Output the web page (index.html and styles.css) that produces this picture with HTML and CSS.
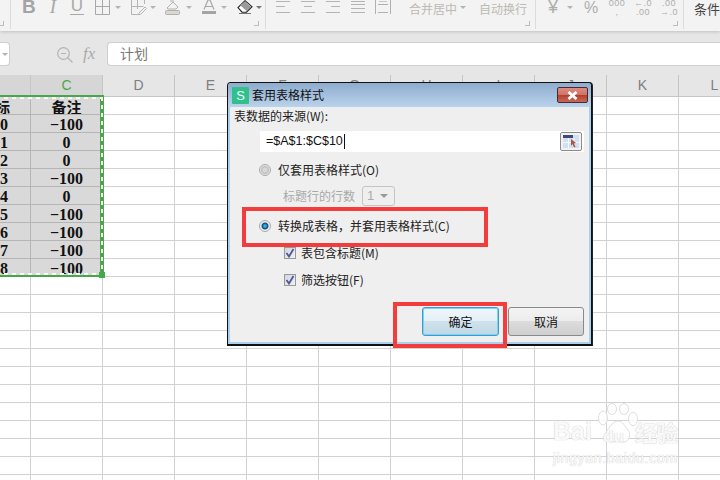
FILE: index.html
```html
<!DOCTYPE html>
<html lang="zh-CN">
<head>
<meta charset="utf-8">
<title>套用表格样式</title>
<link rel="stylesheet" href="styles.css">
</head>
<body>
<div class="page">
  <header class="ribbon">
    <div class="group g0"><i class="corner"></i></div>
    <div class="group g1">
      <span class="tool bold m11">B</span>
      <span class="tool ital m14">I</span>
      <span class="tool und m12">U</span>
      <svg class="ico m11" width="15" height="15" viewBox="0 0 15 15"><path d="M.5-1v15.5h14V-1M7.500-1v15.500M.5 6.500h14" fill="none" stroke="#a8a8a8"/></svg>
      <i class="arr m5"></i>
      <svg class="ico m10" width="16" height="15" viewBox="0 0 16 15"><path d="M.5 0v14.500h8M13.500 0v4M.5 6.500h12M6.500 0v9" fill="none" stroke="#b4b4b4"/><path d="M8 13l6-6 1.500 1.500-6 6H8z" fill="none" stroke="#b4b4b4"/></svg>
      <i class="arr m3"></i>
      <svg class="ico m9" width="16" height="15" viewBox="0 0 16 15"><path d="M2 8l6-6 5 5-2 2H3z" fill="none" stroke="#b0b0b0"/><path d="M5 1h4" stroke="#b0b0b0"/><rect x=".5" y="10.500" width="14" height="4" rx="1" fill="#dcd8d0" stroke="#b0b0b0"/></svg>
      <i class="arr m5"></i>
      <svg class="ico m10" width="14" height="15" viewBox="0 0 14 15"><path d="M2 9.500L6 0h2l4 9.500M3.500 6.500h7" fill="none" stroke="#a8a8a8" stroke-width="1.200"/><rect y="11" width="14" height="3" fill="#a4a4a4"/></svg>
      <i class="arr m5"></i>
      <svg class="ico m10" width="16" height="15" viewBox="0 0 16 15"><path d="M8 0.700l7 6-5.500 5.500H5L1 7.500z" fill="#fff" stroke="#222" stroke-width="1.100"/><path d="M8 1.500l6 5.200-4.500 4.300-6.500-6z" fill="#9a9a9a"/><path d="M2 13.500h12" stroke="#777"/></svg>
      <i class="arr dark m3"></i>
      <i class="corner"></i>
    </div>
    <div class="group g2">
      <svg class="ico m10" width="14" height="14" viewBox="0 0 14 14"><path d="M0 1.500h14M0 6.500h9M0 12.500h14" stroke="#b4b4b4"/></svg>
      <svg class="ico m11" width="14" height="14" viewBox="0 0 14 14"><path d="M0 1.500h14M3 6.500h8M0 12.500h14" stroke="#b4b4b4"/></svg>
      <svg class="ico m11" width="14" height="14" viewBox="0 0 14 14"><path d="M0 1.500h14M5 6.500h9M0 12.500h14" stroke="#b4b4b4"/></svg>
      <svg class="ico m11" width="14" height="14" viewBox="0 0 14 14"><path d="M0 1.500h14M0 4.500h14M0 8.500h14M0 12.500h14" stroke="#b4b4b4"/></svg>
      <svg class="ico m10" width="16" height="14" viewBox="0 0 16 14"><path d="M.5 0v14M15.500 0v14M3 4.500h10M3 12.500h10" stroke="#b0b0b0" fill="none"/><path d="M4 1.500h8" stroke="#c8c8c8"/></svg>
      <span class="tool word m18">合并居中</span>
      <i class="arr m3"></i>
      <span class="tool word m13">自动换行</span>
      <i class="corner"></i>
    </div>
    <div class="group g3">
      <span class="tool yen m12">¥</span>
      <i class="arr m6"></i>
      <span class="tool pct m11">%</span>
      <span class="tool num m11">000<br>,</span>
      <span class="tool num m8">←.0<br>.00</span>
      <span class="tool num m8">.00<br>→.0</span>
      <i class="corner"></i>
    </div>
    <div class="group g4"><span class="tool cond">条件格式</span></div>
  </header>

  <div class="formula">
    <div class="namebox"><i class="arr"></i></div>
    <svg class="zoomico" width="16" height="16" viewBox="0 0 16 16"><circle cx="6.500" cy="6.500" r="5.800" fill="none" stroke="#b4b4b4" stroke-width="1.200"/><path d="M4 6.500h5M10.500 10.500l5 5" stroke="#b4b4b4" stroke-width="1.200"/></svg>
    <span class="fx">fx</span>
    <div class="fbox">计划</div>
  </div>

  <div class="colhead">
    <span class="ch c-first"></span>
    <span class="ch active">C</span>
    <span class="ch">D</span>
    <span class="ch">E</span>
    <span class="ch">F</span>
    <span class="ch">G</span>
    <span class="ch">H</span>
    <span class="ch">I</span>
    <span class="ch">J</span>
    <span class="ch">K</span>
    <span class="ch">L</span>
  </div>

  <main class="sheet">
    <div class="data">
      <div class="cell left head"><span class="cut">标</span></div><div class="cell head">备注</div>
      <div class="cell left">0</div><div class="cell">−100</div>
      <div class="cell left">1</div><div class="cell">0</div>
      <div class="cell left">2</div><div class="cell">0</div>
      <div class="cell left">3</div><div class="cell">−100</div>
      <div class="cell left">4</div><div class="cell">0</div>
      <div class="cell left">5</div><div class="cell">−100</div>
      <div class="cell left">6</div><div class="cell">−100</div>
      <div class="cell left">7</div><div class="cell">−100</div>
      <div class="cell left">8</div><div class="cell">−100</div>
    </div>
    <div class="selection"><i class="handle"></i></div>
  </main>

  <section class="dialog">
    <div class="titlebar">
      <span class="appicon">S</span>
      <span class="title">套用表格样式</span>
      <span class="close"><svg width="13" height="9" viewBox="0 0 13 9"><path d="M2.500 1l8 7M10.500 1l-8 7" stroke="#fff" stroke-width="2.800"/></svg></span>
    </div>
    <div class="body">
      <div class="row lbl">表数据的来源(W):</div>
      <div class="source">
        <span class="srcval">=$A$1:$C$10</span><i class="caret"></i>
        <span class="picker"><svg width="18" height="15" viewBox="0 0 18 15"><rect x="1" y="1" width="16" height="13" fill="#cfe0f5"/><rect x="1" y="1" width="10" height="3" fill="#46467e"/><path d="M1 8.500h16M6.500 4v10M12 4v10" stroke="#f4f8fc"/><path d="M9 5l5 4-2 .5 1.500 3.500-1.500.5-1.500-3.500L9 12z" fill="#b0553e"/></svg></span>
      </div>
      <label class="row opt opt-o"><i class="radio"></i>仅套用表格样式(O)</label>
      <div class="row sub"><span class="muted">标题行的行数</span><span class="select">1<i class="arr"></i></span></div>
      <label class="row opt opt-c"><i class="radio on"></i>转换成表格，并套用表格样式(C)</label>
      <label class="row chk chk-m"><i class="check"><svg width="10" height="10" viewBox="0 0 10 10"><path d="M1.500 5l2.500 3.500L8.500 1" fill="none" stroke="#4a5a9a" stroke-width="1.800"/></svg></i>表包含标题(M)</label>
      <label class="row chk chk-f"><i class="check"><svg width="10" height="10" viewBox="0 0 10 10"><path d="M1.500 5l2.500 3.500L8.500 1" fill="none" stroke="#4a5a9a" stroke-width="1.800"/></svg></i>筛选按钮(F)</label>
      <div class="actions">
        <button class="btn primary">确定</button>
        <button class="btn">取消</button>
      </div>
    </div>
  </section>

  <div class="mark box-a"></div>
  <div class="mark box-b"></div>

  <div class="watermark">
    <svg class="paw" width="42" height="42" viewBox="0 0 42 42"><g fill="#fff" fill-opacity=".8" stroke="#dedede"><ellipse cx="6" cy="15" rx="4.500" ry="7"/><ellipse cx="15" cy="6" rx="4.500" ry="5.500"/><ellipse cx="27" cy="6" rx="4.500" ry="5.500"/><ellipse cx="36" cy="16" rx="4.500" ry="6.500"/><path d="M21 18c5 0 7 6 10 9s2 13-6 12c-3-.5-6-.5-9 0-8 1-9-8-5.500-12S16 18 21 18z"/></g></svg>
    <span class="wm-a">Bai</span><span class="wm-du">du</span><span class="wm-b">经验</span>
    <span class="wm-url">jingyan.baidu.com</span>
  </div>
</div>
</body>
</html>
```
FILE: styles.css
```css
* { box-sizing: border-box; }
html, body { margin: 0; padding: 0; }
body { width: 720px; height: 480px; overflow: hidden; background: #fff; font-family: "Noto Sans CJK SC", "Liberation Sans", sans-serif; }
i { font-style: normal; display: block; }
.page { position: relative; width: 720px; height: 480px; overflow: hidden; display: flex; flex-direction: column; }

/* ribbon */
.ribbon { height: 31px; flex: none; display: flex; background: #f3f3f3; position: relative; z-index: 2; box-shadow: 0 1px 3px rgba(0,0,0,.16); }
.group { position: relative; height: 29px; display: flex; align-items: flex-start; border-right: 1px solid #dcdcdc; flex: none; }
.g0 { width: 11px; }
.g1 { width: 255px; }
.g2 { width: 270px; }
.g3 { width: 148px; }
.g4 { border-right: 0; flex: 1; overflow: hidden; }
.corner { position: absolute; right: 2px; bottom: 2px; width: 5px; height: 5px; border-right: 1px solid #bdbdbd; border-bottom: 1px solid #bdbdbd; }
.g1 > .corner { right: 6px; bottom: 3px; }
.g2 > .corner { right: 5px; bottom: 3px; }
.g3 > .corner { right: 5px; bottom: 3px; }
.g0 > .corner { right: 6px; bottom: 3px; }
.m3 { margin-left: 3px; } .m5 { margin-left: 5px; } .m6 { margin-left: 6px; } .m8 { margin-left: 8px; }
.m9 { margin-left: 9px; } .m10 { margin-left: 10px; } .m11 { margin-left: 11px; } .m12 { margin-left: 12px; }
.m13 { margin-left: 13px; } .m14 { margin-left: 14px; } .m18 { margin-left: 18px; }
.ico { flex: none; display: block; }
.arr { width: 0; height: 0; flex: none; border-left: 3px solid transparent; border-right: 3px solid transparent; border-top: 3px solid #b4b4b4; margin-top: 6px; }
.arr.dark { border-top-color: #777; }
.tool { flex: none; color: #b0b0b0; display: block; white-space: nowrap; }
.bold { width: 12px; font: bold 19px/14px "Liberation Sans", sans-serif; color: #a4a4a4; }
.ital { width: 10px; font: italic 19px/14px "Liberation Serif", serif; color: #a8a8a8; text-align: center; }
.und { width: 14px; height: 15px; font: 17px/12px "Liberation Sans", sans-serif; color: #a8a8a8; text-align: center; border-bottom: 1px solid #a8a8a8; }
.word { width: 48px; font-size: 12px; line-height: 18px; color: #bdb9b4; }
.yen { width: 13px; font: 18px/15px "Liberation Sans", sans-serif; color: #adadad; }
.pct { width: 13px; font: 16px/16px "Liberation Sans", sans-serif; color: #adadad; }
.num { font: 9px/9px "Liberation Sans", sans-serif; letter-spacing: .5px; color: #adadad; width: 18px; text-align: center; margin-top: -1px; }
.cond { margin-left: 10px; font-size: 13px; line-height: 18px; color: #444; }

/* formula */
.formula { height: 35px; flex: none; background: #e6e6e6; display: flex; align-items: flex-end; }
.namebox { width: 10px; height: 24px; background: #fff; border: 1px solid #cfcfcf; border-left: 0; border-radius: 0 4px 4px 0; display: flex; justify-content: center; align-items: center; }
.namebox .arr { margin: 0; }
.zoomico { margin: 0 0 3px 47px; flex: none; }
.fx { width: 17px; margin: 0 0 1px 10px; font: italic 17px/22px "Liberation Serif", serif; color: #aaa; flex: none; }
.fbox { flex: 1; margin-left: 7px; height: 24px; background: #fff; border: 1px solid #cfcfcf; border-right: 0; border-radius: 4px 0 0 4px; padding-left: 12px; font-size: 14px; line-height: 21px; color: #777; }

/* column heads */
.colhead { height: 31px; flex: none; background: #e6e6e6; padding-top: 9px; display: grid; grid-template-columns: 31px repeat(10, 72px); }
.ch { height: 22px; background: #e6e6e6; border-right: 1px solid #c6c6c6; border-bottom: 1px solid #c6c6c6; text-align: center; font: 14px/21px "Liberation Sans", sans-serif; color: #7f7f7f; }
.c-first { background: #d6d6d6; }
.ch.active { background: #d6d6d6; color: #4aa84a; }

/* sheet */
.sheet { flex: 1; position: relative; background-color: #fff;
  background-image: linear-gradient(to right, transparent 71px, #d2d2d2 71px), linear-gradient(to bottom, transparent 17px, #d2d2d2 17px);
  background-size: 72px 18px; background-position: 31px 0; }
.data { display: grid; grid-template-columns: 31px 72px; grid-auto-rows: 18px; }
.cell { background: #d9d9d9; border-right: 1px solid #b5b5b5; border-bottom: 1px solid #b5b5b5; text-align: center; font: bold 16px/20px "Liberation Serif", serif; color: #111; overflow: hidden; white-space: nowrap; }
.cell.head { font: bold 15px/19px "Noto Sans CJK SC", sans-serif; }
.cell.left { text-align: left; }
.cut { display: block; margin-left: -5px; }
.selection { position: absolute; left: -6px; top: -2px; width: 110px; height: 182px; border: solid #46a846; border-width: 2px 4px 2px 2px; }
.selection::after { content: ""; position: absolute; inset: 0 -3px 0 0;
  background:
    repeating-linear-gradient(to bottom, #fff 0 4px, transparent 4px 8px) right top / 2px 100% no-repeat,
    repeating-linear-gradient(to right, #fff 0 4px, transparent 4px 8px) left top / 100% 2px no-repeat,
    repeating-linear-gradient(to right, #fff 0 4px, transparent 4px 8px) left bottom / 100% 2px no-repeat; }
.handle { position: absolute; right: -5px; bottom: -3px; width: 6px; height: 6px; background: #46a846; z-index: 1; }

/* dialog */
.dialog { position: absolute; left: 227px; top: 82px; width: 365px; height: 264px; background: #a9d0ee; border: 1px solid #111; border-bottom-width: 2px; border-radius: 4px 4px 0 0; z-index: 3; display: flex; flex-direction: column; box-shadow: 1px 0 0 #222; }
.titlebar { height: 24px; flex: none; display: flex; align-items: center; background: linear-gradient(#8eacce, #bad3ec); border-radius: 3px 3px 0 0; padding-left: 4px; }
.appicon { width: 17px; height: 17px; background: #2fc08b; color: #f4fffa; border-radius: 1px; font: 13px/17px "Liberation Sans", sans-serif; text-align: center; }
.title { margin-left: 3px; flex: 1; font-size: 12px; line-height: 18px; color: #111; }
.close { width: 31px; height: 16px; margin-right: 3px; border: 1px solid #4a2a30; border-radius: 2px; background: linear-gradient(#dc8c80 0, #cf7366 50%, #b33f2a 51%, #c56a58 100%); display: flex; align-items: center; justify-content: center; }
.close svg { display: block; }
.body { flex: 1; margin: 0 2px 2px 2px; background: #efefef; font-size: 12px; color: #222; display: flex; flex-direction: column; }
.row { height: 18px; line-height: 18px; display: flex; align-items: center; flex: none; white-space: nowrap; }
.lbl { padding-left: 4px; }
.source { height: 21px; margin: 6px 5px 0 30px; background: #fff; display: flex; align-items: center; padding-left: 6px; flex: none; }
.srcval { font: 12.500px/21px "Liberation Sans", sans-serif; color: #111; }
.caret { width: 1px; height: 15px; background: #111; margin-left: 1px; }
.picker { margin-left: auto; margin-right: 2px; width: 22px; height: 19px; border: 1px solid #8c8c8c; border-radius: 2px; background: #f2f2f2; display: flex; align-items: center; justify-content: center; }
.picker svg { display: block; width: 18px; height: 15px; }
.opt { padding-left: 29px; }
.opt-o { margin-top: 9px; }
.opt-c { margin-top: 11px; }
.radio { width: 12px; height: 12px; border-radius: 50%; margin-right: 7px; border: 1px solid #a8a8a8; background: radial-gradient(circle, #d8d8d8 0 2px, #bdbdbd 3.500px, #f4f4f4 5px); }
.radio.on { background: radial-gradient(circle, #3cb0e4 0 1px, #0f5c8e 2.500px, #16547f 3px, #f2f2f2 4px); }
.sub { height: 20px; margin-top: 7px; padding-left: 53px; }
.muted { color: #a8a8a8; }
.select { margin-left: 7px; width: 33px; height: 20px; border: 1px solid #c4c4c4; border-radius: 3px; background: #efefef; color: #aaa; font: 13px/18px "Liberation Sans", sans-serif; padding-left: 4px; display: flex; align-items: center; justify-content: space-between; padding-right: 6px; }
.select .arr { margin: 0; border-left-width: 4px; border-right-width: 4px; border-top-width: 4px; border-top-color: #999; }
.chk { padding-left: 54px; }
.chk-m { margin-top: 9px; }
.chk-f { margin-top: 9px; }
.check { width: 12px; height: 12px; border: 1px solid #999; background: linear-gradient(135deg, #d4d4dc, #f0f0f4); margin-right: 5px; display: flex; align-items: center; justify-content: center; }
.check svg { display: block; }
.actions { margin-top: 18px; height: 29px; display: flex; justify-content: flex-end; gap: 9px; padding-right: 5px; flex: none; }
.btn { width: 76px; height: 29px; padding: 0; border: 1px solid #8a8a8a; border-radius: 3px; font: 12px/26px "Noto Sans CJK SC", sans-serif; color: #111; background: linear-gradient(#f4f4f4 0, #ececec 48%, #dcdcdc 50%, #cfcfcf 100%); }
.btn.primary { width: 77px; border: 1px solid #3d9ad0; box-shadow: inset 0 0 0 1px #7cd4f4; background: linear-gradient(#eef6fa 0, #e4f0f6 48%, #cfe2ec 50%, #bfd8e6 100%); }

/* annotations */
.mark { position: absolute; z-index: 4; border: 4px solid #f33c3c; }
.box-a { left: 242px; top: 207px; width: 246px; height: 40px; }
.box-b { left: 393px; top: 302px; width: 114px; height: 46px; }

/* watermark */
.watermark { position: absolute; z-index: 1; left: 552px; top: 402px; width: 132px; height: 74px; color: rgba(255,255,255,.9); }
.paw { position: absolute; left: 45px; top: 1px; }
.wm-a, .wm-du, .wm-b, .wm-url { position: absolute; text-shadow: 0 0 1px #d0d0d0, 0 0 1px #d0d0d0; white-space: nowrap; }
.wm-a { left: 1px; top: 14px; font: bold 25px/30px "Liberation Sans", sans-serif; }
.wm-du { left: 51px; top: 27px; font: bold 17px/16px "Liberation Sans", sans-serif; }
.wm-b { left: 83px; top: 14px; font: bold 22px/30px "Noto Sans CJK SC", sans-serif; letter-spacing: -1px; }
.wm-url { left: 1px; top: 47px; font: 14px/18px "Liberation Sans", sans-serif; letter-spacing: .7px; }
```
